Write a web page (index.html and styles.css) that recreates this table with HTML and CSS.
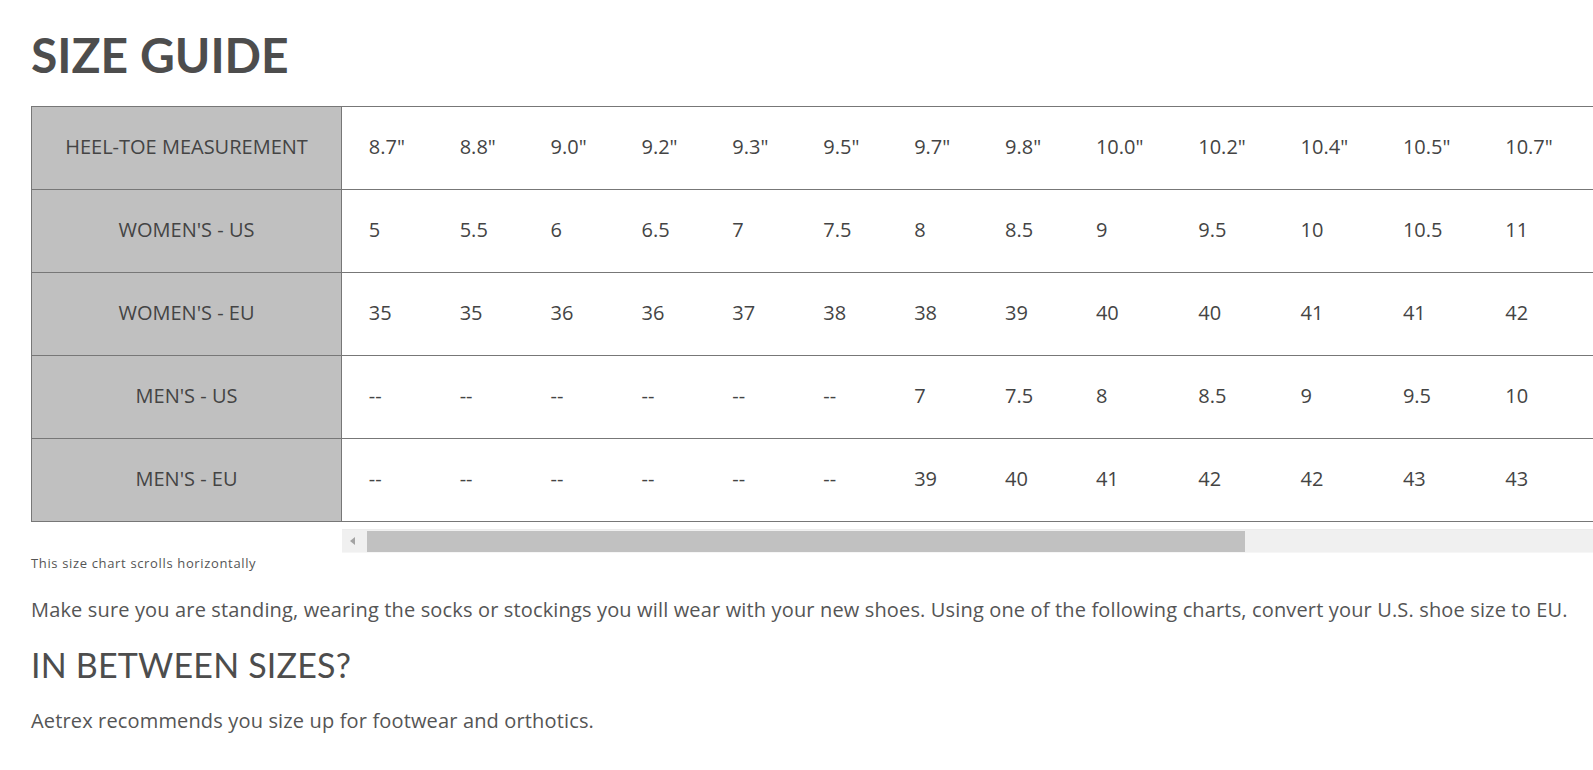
FILE: index.html
```html
<!DOCTYPE html>
<html lang="en">
<head>
<meta charset="utf-8">
<title>Size Guide</title>
<link rel="stylesheet" href="styles.css">
</head>
<body>
<main class="page">
  <h1 class="title">SIZE GUIDE</h1>
  <div class="chart">
    <table class="labels">
      <tr><th>HEEL-TOE MEASUREMENT</th></tr>
      <tr><th>WOMEN'S - US</th></tr>
      <tr><th>WOMEN'S - EU</th></tr>
      <tr><th>MEN'S - US</th></tr>
      <tr><th>MEN'S - EU</th></tr>
    </table>
    <div class="scroller">
      <div class="viewport">
        <table class="data">
          <tr><td>8.7"</td><td>8.8"</td><td>9.0"</td><td>9.2"</td><td>9.3"</td><td>9.5"</td><td>9.7"</td><td>9.8"</td><td>10.0"</td><td>10.2"</td><td>10.4"</td><td>10.5"</td><td>10.7"</td><td class="fill"></td></tr>
          <tr><td>5</td><td>5.5</td><td>6</td><td>6.5</td><td>7</td><td>7.5</td><td>8</td><td>8.5</td><td>9</td><td>9.5</td><td>10</td><td>10.5</td><td>11</td><td class="fill"></td></tr>
          <tr><td>35</td><td>35</td><td>36</td><td>36</td><td>37</td><td>38</td><td>38</td><td>39</td><td>40</td><td>40</td><td>41</td><td>41</td><td>42</td><td class="fill"></td></tr>
          <tr><td>--</td><td>--</td><td>--</td><td>--</td><td>--</td><td>--</td><td>7</td><td>7.5</td><td>8</td><td>8.5</td><td>9</td><td>9.5</td><td>10</td><td class="fill"></td></tr>
          <tr><td>--</td><td>--</td><td>--</td><td>--</td><td>--</td><td>--</td><td>39</td><td>40</td><td>41</td><td>42</td><td>42</td><td>43</td><td>43</td><td class="fill"></td></tr>
        </table>
      </div>
      <div class="scrollbar">
        <span class="sb-arrow"></span>
        <span class="sb-thumb"></span>
      </div>
    </div>
  </div>
  <p class="note">This size chart scrolls horizontally</p>
  <p class="text">Make sure you are standing, wearing the socks or stockings you will wear with your new shoes. Using one of the following charts, convert your U.S. shoe size to EU.</p>
  <h2 class="subtitle">IN BETWEEN SIZES?</h2>
  <p class="text">Aetrex recommends you size up for footwear and orthotics.</p>
</main>
</body>
</html>
```

FILE: styles.css
```css
html, body {
  margin: 0;
  padding: 0;
  background: #ffffff;
}

body {
  font-family: "Open Sans", "Liberation Sans", sans-serif;
  color: #4a4a4a;
  overflow: hidden;
}

.page {
  padding: 26px 0 0 31px;
}

.title {
  font-family: Lato, "Open Sans", sans-serif;
  font-weight: 700;
  font-size: 48px;
  line-height: 58px;
  letter-spacing: 0;
  margin: 0 0 22px 0;
  color: #4d4d4d;
}

.chart {
  display: flex;
  align-items: flex-start;
}

.labels {
  border-collapse: collapse;
  flex: none;
}

.labels th {
  width: 309px;
  height: 79px;
  padding: 0 0 3px 0;
  background: #c0c0c0;
  border: 1px solid #777777;
  font-weight: 400;
  font-size: 20px;
  text-align: center;
  vertical-align: middle;
  color: #444444;
  white-space: nowrap;
}

.scroller {
  flex: 1;
  min-width: 0;
}

.viewport {
  overflow: hidden;
}

.data {
  border-collapse: collapse;
  width: 100%;
}

.data td {
  height: 79px;
  padding: 0 28px 3px 26.8px;
  border-top: 1px solid #777777;
  border-bottom: 1px solid #777777;
  font-size: 20px;
  text-align: left;
  vertical-align: middle;
  white-space: nowrap;
  color: #444444;
}

.data td.fill {
  width: 100%;
  padding: 0;
}

.scrollbar {
  display: flex;
  height: 24px;
  margin-top: 7px;
  background: #f0f0f0;
  border-top: 1px solid #ececec;
  border-bottom: 1px solid #f6f6f6;
  box-sizing: border-box;
  align-items: center;
}

.sb-arrow {
  flex: none;
  width: 25px;
  height: 22px;
  position: relative;
}

.sb-arrow::before {
  content: "";
  position: absolute;
  left: 8px;
  top: 7px;
  border-right: 5px solid #a3a3a3;
  border-top: 4px solid transparent;
  border-bottom: 4px solid transparent;
}

.sb-thumb {
  flex: none;
  width: 878px;
  height: 21px;
  background: #c1c1c1;
}

.note {
  margin: 1px 0 0 0;
  font-size: 13px;
  line-height: 18px;
  letter-spacing: 0.65px;
  color: #555555;
}

.text {
  margin: 23px 0 0 0;
  font-size: 20px;
  line-height: 30px;
  letter-spacing: 0.15px;
  color: #555555;
}

.subtitle {
  font-family: Lato, "Open Sans", sans-serif;
  font-weight: 400;
  font-size: 34px;
  line-height: 40.8px;
  letter-spacing: 0.2px;
  margin: 20px 0 0 0;
  color: #4d4d4d;
}

.subtitle + .text {
  margin-top: 20px;
}
```
